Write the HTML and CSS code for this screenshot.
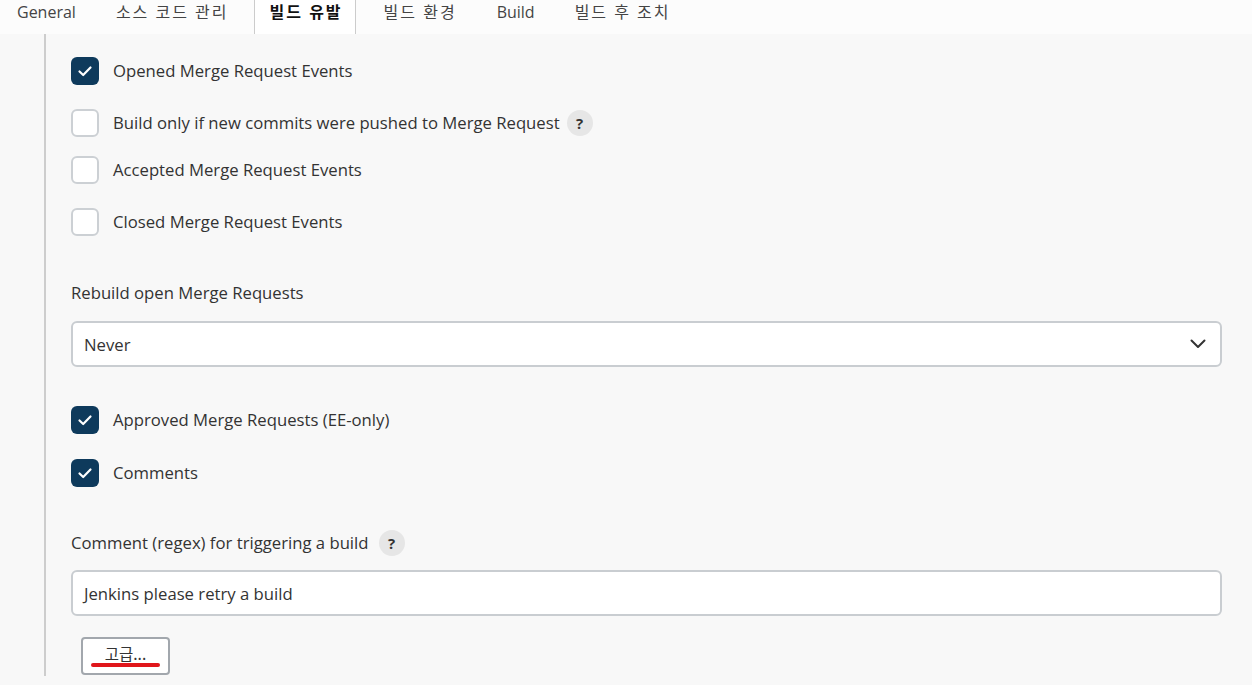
FILE: index.html
```html
<!DOCTYPE html>
<html lang="ko">
<head>
<meta charset="utf-8">
<title>빌드 유발</title>
<link rel="stylesheet" href="styles.css">
</head>
<body>
<nav class="tabs">
  <span class="tab">General</span>
  <span class="tab ko">소스 코드 관리</span>
  <span class="tab ko active">빌드 유발</span>
  <span class="tab ko">빌드 환경</span>
  <span class="tab">Build</span>
  <span class="tab ko">빌드 후 조치</span>
</nav>
<main class="content">
  <div class="check-row r1">
    <span class="box checked"><svg viewBox="0 0 28 28" width="28" height="28"><path d="M8.5 14.5 L12.2 18 L19.5 10.5" fill="none" stroke="#fff" stroke-width="2.2" stroke-linecap="round" stroke-linejoin="round"/></svg></span>
    <span class="label">Opened Merge Request Events</span>
  </div>
  <div class="check-row r2">
    <span class="box"></span>
    <span class="label">Build only if new commits were pushed to Merge Request</span>
    <span class="help">?</span>
  </div>
  <div class="check-row r3">
    <span class="box"></span>
    <span class="label">Accepted Merge Request Events</span>
  </div>
  <div class="check-row r4">
    <span class="box"></span>
    <span class="label">Closed Merge Request Events</span>
  </div>

  <div class="field-label f1">Rebuild open Merge Requests</div>
  <div class="select">
    <span>Never</span>
    <svg viewBox="0 0 16 10" width="16" height="10"><path d="M1.5 1.5 L8 8 L14.5 1.5" fill="none" stroke="#333" stroke-width="2" stroke-linecap="round" stroke-linejoin="round"/></svg>
  </div>

  <div class="check-row r5">
    <span class="box checked"><svg viewBox="0 0 28 28" width="28" height="28"><path d="M8.5 14.5 L12.2 18 L19.5 10.5" fill="none" stroke="#fff" stroke-width="2.2" stroke-linecap="round" stroke-linejoin="round"/></svg></span>
    <span class="label">Approved Merge Requests (EE-only)</span>
  </div>
  <div class="check-row r6">
    <span class="box checked"><svg viewBox="0 0 28 28" width="28" height="28"><path d="M8.5 14.5 L12.2 18 L19.5 10.5" fill="none" stroke="#fff" stroke-width="2.2" stroke-linecap="round" stroke-linejoin="round"/></svg></span>
    <span class="label">Comments</span>
  </div>

  <div class="field-label f2">Comment (regex) for triggering a build <span class="help">?</span></div>
  <div class="input">Jenkins please retry a build</div>

  <button class="advanced">고급...<span class="mark"></span></button>
</main>
</body>
</html>
```

FILE: styles.css
```css
html, body {
  margin: 0;
  padding: 0;
}
body {
  background: #f8f8f8;
  font-family: "Open Sans", "Noto Sans CJK KR", sans-serif;
  color: #333;
  font-size: 16.7px;
  width: 1252px;
  height: 685px;
  overflow: hidden;
}
.tabs {
  display: flex;
  height: 34px;
  background: #fcfcfc;
}
.tab {
  display: flex;
  align-items: center;
  padding: 0 20px 10px;
  font-size: 16px;
  color: #444;
  line-height: 24px;
}
.tab.ko {
  letter-spacing: 2px;
}
.tab:first-child {
  padding-left: 17px;
}
.tab.active {
  background: #fff;
  font-weight: 700;
  color: #111;
  padding: 0 12px 10px 15px;
  margin: 0 8px 0 5px;
  border-left: 1px solid #ccc;
  border-right: 1px solid #ccc;
}
.content {
  margin-left: 44px;
  border-left: 2px solid #cdcdcd;
  padding: 23px 30px 1px 25px;
  display: flex;
  flex-direction: column;
  align-items: flex-start;
}
.content > * {
  flex-shrink: 0;
}
.check-row {
  display: flex;
  align-items: center;
  gap: 14px;
  height: 28px;
}
.r2 { margin-top: 24px; }
.r3 { margin-top: 19px; }
.r4 { margin-top: 24px; }
.r5 { margin-top: 39px; }
.r6 { margin-top: 25px; }
.box {
  width: 28px;
  height: 28px;
  box-sizing: border-box;
  border: 2px solid #ccd0d4;
  border-radius: 6px;
  background: #fff;
  display: block;
}
.box.checked {
  background: #0e3a5c;
  border: none;
}
.box svg { display: block; }
.label {
  color: #333;
  line-height: 24px;
}
.help {
  display: inline-flex;
  align-items: center;
  justify-content: center;
  width: 26px;
  height: 26px;
  border-radius: 50%;
  background: #e6e6e6;
  font-size: 15px;
  font-weight: 700;
  color: #333;
}
.check-row .help {
  margin-left: -7px;
}
.field-label {
  line-height: 24px;
  color: #333;
  display: flex;
  align-items: center;
  gap: 10px;
}
.f1 { margin-top: 45px; }
.f2 { margin-top: 43px; }
.select, .input {
  align-self: stretch;
  box-sizing: border-box;
  height: 46px;
  background: #fff;
  border: 2px solid #c9cdd1;
  border-radius: 6px;
  padding: 0 14px 0 11px;
  display: flex;
  align-items: center;
  color: #333;
}
.select {
  margin-top: 16px;
  justify-content: space-between;
}
.input { margin-top: 14px; }
.advanced {
  position: relative;
  margin-top: 21px;
  margin-left: 10px;
  width: 89px;
  height: 38px;
  box-sizing: border-box;
  border: 2px solid #a2a7ad;
  border-radius: 4px;
  background: #fff;
  font-family: "Noto Sans CJK KR", "Open Sans", sans-serif;
  font-size: 15.5px;
  color: #333;
  padding: 0 0 6px 0;
  line-height: 20px;
}
.mark {
  position: absolute;
  left: 8px;
  top: 24px;
  width: 69px;
  height: 4px;
  border-radius: 2px;
  background: #e0161b;
}
```
